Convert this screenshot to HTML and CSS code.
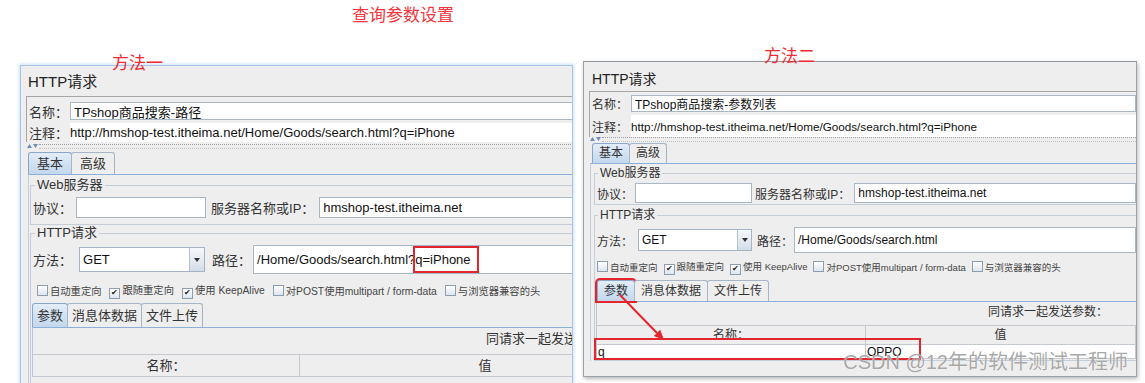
FILE: index.html
```html
<!DOCTYPE html>
<html>
  <head>
    <meta charset="utf-8">
    <link rel="stylesheet" href="styles.css">
  </head>
  <body>
    <h1 class="headline">查询参数设置</h1>
    <div class="shots">

      <!-- 方法一: path carries the query string -->
      <section class="shot shot-a">
        <span class="note">方法一</span>
        <div class="win">
          <div class="jm">
            <div class="jm-title">HTTP请求</div>
            <div class="jm-meta">
              <div class="meta-row">
                <span class="lbl">名称：</span>
                <span class="field">TPshop商品搜索-路径</span>
              </div>
              <div class="meta-row note-row">
                <span class="lbl">注释：</span>
                <span class="field flat">http://hmshop-test.itheima.net/Home/Goods/search.html?q=iPhone</span>
              </div>
            </div>
            <div class="splitter">
              <svg width="11" height="5" viewBox="0 0 11 5"><path d="M0 4 L2.5 0 L5 4 Z M6 0 L11 0 L8.5 4 Z" fill="#6f8db5"/></svg>
            </div>
            <div class="tabs">
              <span class="tab on">基本</span>
              <span class="tab">高级</span>
            </div>
            <div class="pane">
              <fieldset class="group">
                <legend>Web服务器</legend>
                <div class="frow">
                  <span class="lbl">协议：</span>
                  <span class="field proto"></span>
                  <span class="lbl server-lbl">服务器名称或IP：</span>
                  <span class="field server">hmshop-test.itheima.net</span>
                </div>
              </fieldset>
              <fieldset class="group">
                <legend>HTTP请求</legend>
                <div class="frow method">
                  <span class="lbl">方法：</span>
                  <span class="combo"><span class="combo-val">GET</span><span class="combo-btn"></span></span>
                  <span class="lbl path-lbl">路径：</span>
                  <span class="field path">/Home/Goods/search.html?<mark class="hit">q=iPhone</mark></span>
                </div>
                <div class="checks">
                  <span class="chk">自动重定向</span>
                  <span class="chk on">跟随重定向</span>
                  <span class="chk on">使用 KeepAlive</span>
                  <span class="chk">对POST使用multipart / form-data</span>
                  <span class="chk">与浏览器兼容的头</span>
                </div>
                <div class="tabs sub">
                  <span class="tab on">参数</span>
                  <span class="tab">消息体数据</span>
                  <span class="tab">文件上传</span>
                </div>
                <div class="pane sub">
                  <div class="params-cap">同请求一起发送参数：</div>
                  <div class="params">
                    <div class="params-head"><span>名称：</span><span>值</span></div>
                  </div>
                </div>
              </fieldset>
            </div>
          </div>
        </div>
      </section>

      <!-- 方法二: parameter list -->
      <section class="shot shot-b">
        <span class="note">方法二</span>
        <div class="win">
          <div class="jm">
            <div class="jm-title">HTTP请求</div>
            <div class="jm-meta">
              <div class="meta-row">
                <span class="lbl">名称：</span>
                <span class="field">TPshop商品搜索-参数列表</span>
              </div>
              <div class="meta-row note-row">
                <span class="lbl">注释：</span>
                <span class="field flat">http://hmshop-test.itheima.net/Home/Goods/search.html?q=iPhone</span>
              </div>
            </div>
            <div class="splitter">
              <svg width="11" height="5" viewBox="0 0 11 5"><path d="M0 4 L2.5 0 L5 4 Z M6 0 L11 0 L8.5 4 Z" fill="#6f8db5"/></svg>
            </div>
            <div class="tabs">
              <span class="tab on">基本</span>
              <span class="tab">高级</span>
            </div>
            <div class="pane">
              <fieldset class="group">
                <legend>Web服务器</legend>
                <div class="frow">
                  <span class="lbl">协议：</span>
                  <span class="field proto"></span>
                  <span class="lbl server-lbl">服务器名称或IP：</span>
                  <span class="field server">hmshop-test.itheima.net</span>
                </div>
              </fieldset>
              <fieldset class="group">
                <legend>HTTP请求</legend>
                <div class="frow method">
                  <span class="lbl">方法：</span>
                  <span class="combo"><span class="combo-val">GET</span><span class="combo-btn"></span></span>
                  <span class="lbl path-lbl">路径：</span>
                  <span class="field path">/Home/Goods/search.html</span>
                </div>
                <div class="checks">
                  <span class="chk">自动重定向</span>
                  <span class="chk on">跟随重定向</span>
                  <span class="chk on">使用 KeepAlive</span>
                  <span class="chk">对POST使用multipart / form-data</span>
                  <span class="chk">与浏览器兼容的头</span>
                </div>
                <div class="tabs sub">
                  <span class="tab on boxed">参数</span>
                  <span class="tab">消息体数据</span>
                  <span class="tab">文件上传</span>
                </div>
                <div class="pane sub">
                  <div class="params-cap">同请求一起发送参数：</div>
                  <div class="params">
                    <div class="params-head"><span>名称：</span><span>值</span></div>
                    <div class="params-row"><span>q</span><span>OPPO</span></div>
                  </div>
                </div>
              </fieldset>
            </div>
          </div>
        </div>
        <div class="mark-row"></div>
        <svg class="arrow" width="56" height="54" viewBox="0 0 56 54">
          <line x1="6" y1="5" x2="43" y2="43" stroke="#e3262d" stroke-width="2"/>
          <polygon points="50,50 39.8,46 46.2,39.7" fill="#e3262d"/>
        </svg>
        <span class="watermark">CSDN @12年的软件测试工程师</span>
      </section>

    </div>
  </body>
</html>
```

FILE: styles.css
```css
* {
    box-sizing: border-box;
}

body {
    margin: 0;
    height: 383px;
    overflow: hidden;
    background: #fff;
    font-family: "Liberation Sans", "Noto Sans CJK SC", sans-serif;
    font-size: 13px;
    color: #2b2b2b;
}

.headline {
    margin: 0;
    height: 26px;
    padding: 6px 0 0 352px;
    font-size: 17px;
    font-weight: normal;
    line-height: 20px;
    color: #f1353b;
}

.shots {
    display: flex;
    align-items: flex-start;
    gap: 10px;
    padding: 35px 0 0 20px;
}

.shot {
    position: relative;
}

.shot-a {
    width: 553px;
    height: 330px;
    margin-top: 4px;
    border: 1px solid #a8c4e6;
    box-shadow: 0 0 3px 1px #cfe0f5;
}

.shot-b {
    width: 554px;
    height: 316px;
    border: 1px solid #9aa3ac;
    border-top-color: #8e969e;
    box-shadow: 1px 2px 4px rgba(0, 0, 0, .28);
    font-size: 12px;
}

.note {
    position: absolute;
    z-index: 2;
    font-size: 17px;
    line-height: 20px;
    color: #ef2a32;
}

.shot-a .note {
    left: 91px;
    top: -12px;
}

.shot-b .note {
    left: 180px;
    top: -15px;
}

.win {
    height: 100%;
    overflow: hidden;
    background: #eeeeee;
}

.jm {
    width: 650px;
}

.shot-b .jm {
    width: auto;
}

/* title + name / comment */
.jm-title {
    height: 30px;
    padding: 7px 0 0 7px;
    font-size: 15px;
    line-height: 17px;
    color: #222;
}

.jm-meta {
    margin-left: 5px;
    padding: 5px 0 0 2px;
    border-top: 1px solid #a6a6a6;
    border-left: 1px solid #a6a6a6;
}

.meta-row {
    display: flex;
    height: 18px;
}

.meta-row.note-row {
    height: 19px;
    margin-top: 3px;
}

.meta-row .lbl {
    width: 41px;
    flex: none;
    display: flex;
    align-items: center;
}

.lbl {
    flex: none;
    white-space: nowrap;
    color: #333;
}

.field {
    display: flex;
    align-items: center;
    flex: 1;
    min-width: 0;
    padding-left: 3px;
    background: #fff;
    border: 1px solid #a9b7c5;
    white-space: nowrap;
    overflow: hidden;
    color: #111;
}

.field.flat {
    border: none;
    padding-left: 0;
}

.splitter {
    display: flex;
    align-items: center;
    gap: 1px;
    height: 9px;
    padding-left: 6px;
}

.splitter::after {
    content: "";
    flex: 1;
    height: 3px;
    border-top: 1px dotted #9c9c9c;
    border-bottom: 1px dotted #c2c2c2;
}

/* tabs */
.tabs {
    display: flex;
    height: 22px;
    margin-top: 1px;
    padding-left: 7px;
}

.tab {
    padding: 0 8px;
    margin-right: -1px;
    border: 1px solid #a7b6c7;
    border-bottom: none;
    border-radius: 3px 3px 0 0;
    background: #eeeeee;
    line-height: 21px;
    color: #333;
}

.tab.on {
    background: linear-gradient(#e2edf8, #c3d7ed);
    border-color: #8aa7c9;
}

.pane {
    margin-left: 7px;
    padding-left: 1px;
    border-top: 1px solid #8db0d9;
    border-left: 1px solid #c2cfdc;
}

.group {
    margin: 3px 0 0;
    padding: 0 0 6px 2px;
    min-width: 0;
    border: 1px solid #c5ced8;
    border-right: none;
}

.group + .group {
    margin-top: 1px;
}

.group legend {
    margin-left: 2px;
    padding: 0 2px;
    line-height: 14px;
    color: #333;
}

.frow {
    display: flex;
    align-items: center;
    height: 21px;
    margin-top: 5px;
}

.frow .field {
    align-self: stretch;
}

.frow.method {
    height: 29px;
}

.proto {
    flex: none;
    width: 130px;
    margin-left: 4px;
}

.server-lbl {
    margin-left: 5px;
}

.server {
    margin-left: 5px;
}

.combo {
    display: flex;
    flex: none;
    width: 126px;
    height: 25px;
    margin-left: 7px;
    background: #fff;
    border: 1px solid #a5b4c4;
}

.combo-val {
    flex: 1;
    padding-left: 3px;
    line-height: 23px;
    color: #111;
}

.combo-btn {
    display: flex;
    align-items: center;
    justify-content: center;
    width: 15px;
    border-left: 1px solid #b4c2d0;
    background: linear-gradient(#f6f8fb, #d3dde8);
}

.combo-btn::after {
    content: "";
    border-left: 3px solid transparent;
    border-right: 3px solid transparent;
    border-top: 4px solid #333;
}

.path-lbl {
    margin-left: 7px;
}

.path {
    margin-left: 2px;
}

.hit {
    align-self: stretch;
    display: flex;
    align-items: center;
    padding: 0 6px 0 0;
    margin-left: -2px;
    background: none;
    color: #111;
    border: 2px solid #e3262d;
}

/* checkboxes */
.checks {
    display: flex;
    align-items: center;
    gap: 8px;
    height: 14px;
    margin-top: 9px;
    padding-left: 4px;
    font-size: 10.3px;
    color: #444;
    white-space: nowrap;
}

.chk::before {
    content: "";
    display: inline-block;
    width: 9px;
    height: 9px;
    margin-right: 2px;
    vertical-align: -1px;
    border: 1px solid #8c9db0;
    background: linear-gradient(#fff, #dde5ee);
    font-size: 8px;
    line-height: 8px;
    text-align: center;
    color: #222;
}

.chk.on::before {
    content: "✔";
}

.tabs.sub {
    height: 24px;
    margin-top: 6px;
    margin-left: -1px;
    padding-left: 0;
}

.tabs.sub .tab {
    padding: 0 4px;
    line-height: 23px;
}

.pane.sub {
    margin-left: -1px;
    padding-left: 0;
    border-left-color: #b8c6d6;
}

.params-cap {
    height: 22px;
    padding-right: 55px;
    line-height: 22px;
    text-align: right;
    color: #333;
}

.params {
    margin-top: 4px;
}

.params-head,
.params-row {
    display: grid;
    grid-template-columns: 267px 1fr;
}

.params-head {
    height: 23px;
    line-height: 21px;
    text-align: center;
    border-top: 1px solid #c3c9cf;
    border-bottom: 1px solid #c3c9cf;
    color: #333;
}

.params-head span {
    border-right: 1px solid #c3c9cf;
}

.params-row {
    height: 14px;
    line-height: 14px;
    background: #fff;
    border-bottom: 1px solid #c3c9cf;
    color: #111;
}

.params-row span {
    padding-left: 1px;
    border-right: 1px solid #c3c9cf;
}

/* 方法二 sizes */
.shot-b .jm-title {
    height: 29px;
    padding: 6px 0 0 8px;
    font-size: 14px;
    line-height: 23px;
}

.shot-b .jm-meta {
    padding-top: 3px;
}

.shot-b .meta-row {
    height: 17px;
}

.shot-b .meta-row.note-row {
    height: 22px;
}

.shot-b .meta-row .lbl {
    width: 39px;
}

.shot-b .field.flat {
    font-size: 11.7px;
}

.shot-b .splitter {
    height: 5px;
}

.shot-b .tabs {
    height: 20px;
    padding-left: 8px;
}

.shot-b .tab {
    padding: 0 6px;
    line-height: 19px;
}

.shot-b .pane {
    margin-left: 6px;
    padding-left: 3px;
}

.shot-b .group {
    margin-top: 2px;
    padding-bottom: 1px;
}

.shot-b .group + .group {
    margin-top: 3px;
}

.shot-b .group legend {
    margin-left: 1px;
}

.shot-b .frow {
    height: 20px;
    margin-top: 3px;
}

.shot-b .frow.method {
    height: 26px;
    margin-top: 5px;
}

.shot-b .proto {
    width: 117px;
    margin-left: 2px;
}

.shot-b .server-lbl {
    margin-left: 3px;
}

.shot-b .server {
    margin-left: 4px;
}

.shot-b .combo {
    width: 114px;
    height: 22px;
    margin-left: 5px;
}

.shot-b .combo-val {
    line-height: 20px;
}

.shot-b .combo-btn {
    width: 14px;
}

.shot-b .path-lbl {
    margin-left: 5px;
}

.shot-b .path {
    margin-left: 1px;
}

.shot-b .checks {
    gap: 6px;
    margin-top: 7px;
    padding-left: 0;
    font-size: 9.5px;
}

.shot-b .tabs.sub {
    height: 21px;
    margin-top: 6px;
    margin-left: 0;
    padding-left: 0;
}

.shot-b .tabs.sub .tab {
    padding: 0 6px;
    line-height: 20px;
}

.shot-b .tab.boxed {
    outline: 2px solid #e3262d;
}

.shot-b .pane.sub {
    margin-left: -1px;
    padding-left: 0;
}

.shot-b .params-cap {
    height: 20px;
    padding-right: 28px;
    line-height: 20px;
}

.shot-b .params {
    margin-top: 3px;
    border-right: 1px solid #c3c9cf;
}

.shot-b .params-head,
.shot-b .params-row {
    grid-template-columns: 269px 1fr;
}

.shot-b .params-head {
    height: 20px;
    line-height: 18px;
}

.shot-b .params-row span:last-child,
.shot-b .params-head span:last-child {
    border-right: none;
}

/* annotations over 方法二 */
.mark-row {
    position: absolute;
    left: 10px;
    top: 276px;
    width: 327px;
    height: 22px;
    border: 2px solid #e3262d;
}

.arrow {
    position: absolute;
    left: 30px;
    top: 228px;
}

.watermark {
    position: absolute;
    right: 8px;
    top: 288px;
    font-size: 20px;
    line-height: 24px;
    white-space: nowrap;
    color: rgba(135, 135, 135, .72);
    text-shadow: 0 0 1px rgba(255, 255, 255, .9);
}
```
